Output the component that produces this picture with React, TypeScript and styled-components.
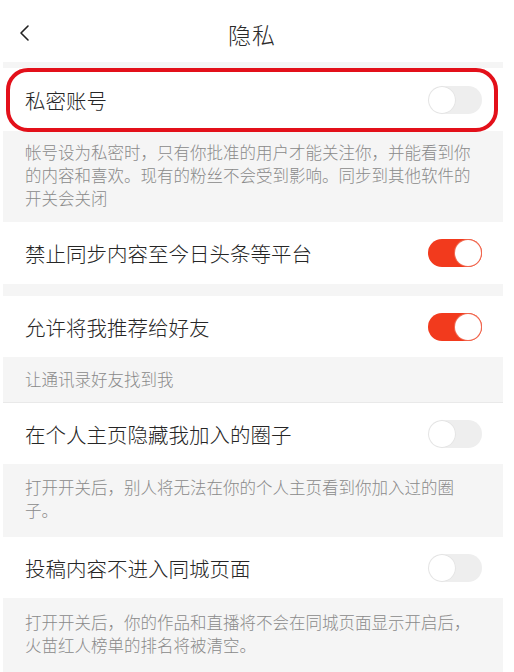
import * as React from 'react';
import styled, {createGlobalStyle} from 'styled-components';

const GlobalStyle = createGlobalStyle`
  html, body {
    margin: 0;
    padding: 0;
    background: #ffffff;
  }
  body {
    font-family: "Noto Sans CJK SC", "Noto Sans", sans-serif;
  }
`;

const Page = styled.div`
  width: 500px;
  margin-left: 3px;
  background: #f5f5f5;
`;

const Header = styled.div`
  display: grid;
  grid-template-columns: 1fr auto 1fr;
  align-items: center;
  height: 62px;
  margin-left: -3px;
  width: 514px;
  background: #ffffff;
`;

const BackButton = styled.div`
  display: flex;
  align-items: center;
  padding: 4px 0 0 18px;
  height: 100%;
  box-sizing: border-box;
`;

const Title = styled.div`
  font-size: 23px;
  font-weight: 300;
  color: #2a2a2a;
  letter-spacing: 1px;
  margin: 6px 10px 0 0;
`;

const Gap = styled.div<{h: number}>`
  height: ${(p) => p.h}px;
`;

const Row = styled.div<{h?: number}>`
  position: relative;
  box-sizing: border-box;
  display: flex;
  align-items: center;
  justify-content: space-between;
  height: ${(p) => p.h || 61}px;
  padding: 0 21px 0 22px;
  background: #ffffff;
`;

const RowLabel = styled.span`
  font-size: 20.5px;
  font-weight: 300;
  color: #262626;
`;

const Highlight = styled.div`
  position: absolute;
  left: 3px;
  right: 5px;
  top: 0;
  bottom: -1px;
  border: 4px solid #e3101a;
  border-radius: 22px;
  pointer-events: none;
`;

const Desc = styled.div<{pt: number; pb: number; divider?: boolean}>`
  padding: ${(p) => p.pt}px 22px ${(p) => p.pb}px 22px;
  font-size: 16.5px;
  font-weight: 300;
  line-height: 23px;
  color: #8a8a8a;
  border-bottom: ${(p) => (p.divider ? '1px solid #e9e9e9' : 'none')};
`;

const Track = styled.div<{on: boolean}>`
  position: relative;
  box-sizing: border-box;
  width: 54px;
  height: 28px;
  border-radius: 14px;
  background: ${(p) => (p.on ? '#f23a1d' : '#eeeeee')};
  flex-shrink: 0;
`;

const Knob = styled.div<{on: boolean}>`
  position: absolute;
  top: 1px;
  left: ${(p) => (p.on ? '27px' : '1px')};
  width: 26px;
  height: 26px;
  border-radius: 50%;
  background: #ffffff;
  box-shadow: ${(p) => (p.on ? '0 0 0 1px #f06a52' : '0 0 1px 0.5px rgba(0,0,0,.08)')};
`;

const Toggle = ({on}: {on: boolean}) => (
  <Track on={on}>
    <Knob on={on} />
  </Track>
);

export default function App() {
  return (
    <>
      <GlobalStyle />
      <Page>
        <Header>
          <BackButton>
            <svg width="14" height="18" viewBox="0 0 14 18">
              <path d="M10 2 L3 9 L10 16" fill="none" stroke="#222" strokeWidth="1.6" strokeLinecap="round" strokeLinejoin="round" />
            </svg>
          </BackButton>
          <Title>隐私</Title>
          <div />
        </Header>
        <Gap h={6} />
        <Row h={63}>
          <RowLabel>私密账号</RowLabel>
          <Toggle on={false} />
          <Highlight />
        </Row>
        <Desc pt={10} pb={12}>
          帐号设为私密时，只有你批准的用户才能关注你，并能看到你的内容和喜欢。现有的粉丝不会受到影响。同步到其他软件的开关会关闭
        </Desc>
        <Row h={62}>
          <RowLabel>禁止同步内容至今日头条等平台</RowLabel>
          <Toggle on={true} />
        </Row>
        <Gap h={12} />
        <Row h={61}>
          <RowLabel>允许将我推荐给好友</RowLabel>
          <Toggle on={true} />
        </Row>
        <Desc pt={11} pb={11} divider>
          让通讯录好友找到我
        </Desc>
        <Row h={61}>
          <RowLabel>在个人主页隐藏我加入的圈子</RowLabel>
          <Toggle on={false} />
        </Row>
        <Desc pt={12} pb={15}>
          打开开关后，别人将无法在你的个人主页看到你加入过的圈子。
        </Desc>
        <Row h={61}>
          <RowLabel>投稿内容不进入同城页面</RowLabel>
          <Toggle on={false} />
        </Row>
        <Desc pt={13} pb={30}>
          打开开关后，你的作品和直播将不会在同城页面显示开启后，火苗红人榜单的排名将被清空。
        </Desc>
      </Page>
    </>
  );
}
